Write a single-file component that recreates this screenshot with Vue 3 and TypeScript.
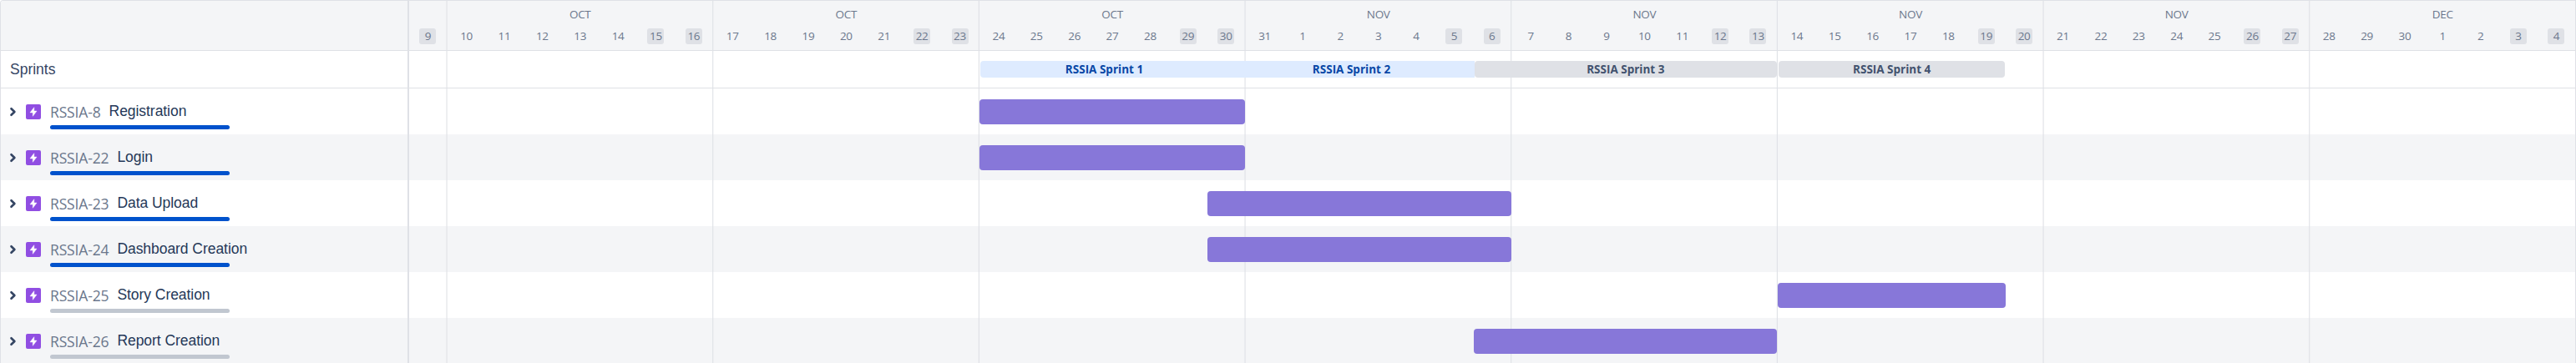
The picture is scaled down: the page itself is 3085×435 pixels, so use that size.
<script setup lang="ts">
interface Week { month: string; days: number[]; off: number[] }
interface Epic { id: string; title: string; done: boolean; start: number; end: number }
interface Sprint { name: string; start: number; end: number; tone: 'active' | 'future'; joined: string }

const PANEL = 490
const FIRST_LINE = 534.5
const WEEK = 318.67

const weeks: Week[] = [
  { month: 'OCT', days: [10, 11, 12, 13, 14, 15, 16], off: [5, 6] },
  { month: 'OCT', days: [17, 18, 19, 20, 21, 22, 23], off: [5, 6] },
  { month: 'OCT', days: [24, 25, 26, 27, 28, 29, 30], off: [5, 6] },
  { month: 'NOV', days: [31, 1, 2, 3, 4, 5, 6], off: [5, 6] },
  { month: 'NOV', days: [7, 8, 9, 10, 11, 12, 13], off: [5, 6] },
  { month: 'NOV', days: [14, 15, 16, 17, 18, 19, 20], off: [5, 6] },
  { month: 'NOV', days: [21, 22, 23, 24, 25, 26, 27], off: [5, 6] },
  { month: 'DEC', days: [28, 29, 30, 1, 2, 3, 4], off: [5, 6] },
]

const sprints: Sprint[] = [
  { name: 'RSSIA Sprint 1', start: 1174, end: 1471, tone: 'active', joined: 'first' },
  { name: 'RSSIA Sprint 2', start: 1471, end: 1766, tone: 'active', joined: 'last' },
  { name: 'RSSIA Sprint 3', start: 1766, end: 2127.6, tone: 'future', joined: '' },
  { name: 'RSSIA Sprint 4', start: 2130.4, end: 2401, tone: 'future', joined: '' },
]

const epics: Epic[] = [
  { id: 'RSSIA-8', title: 'Registration', done: true, start: 1173, end: 1491.3 },
  { id: 'RSSIA-22', title: 'Login', done: true, start: 1173, end: 1491.3 },
  { id: 'RSSIA-23', title: 'Data Upload', done: true, start: 1446, end: 1810 },
  { id: 'RSSIA-24', title: 'Dashboard Creation', done: true, start: 1446, end: 1810 },
  { id: 'RSSIA-25', title: 'Story Creation', done: false, start: 2129, end: 2402 },
  { id: 'RSSIA-26', title: 'Report Creation', done: false, start: 1765, end: 2128.4 },
]

const lines = weeks.map((_, i) => FIRST_LINE + WEEK * i - PANEL)

function sprintStyle(i: number) {
  const from = i === 0 ? PANEL : sprints[i - 1].end
  return { marginLeft: `${sprints[i].start - from}px`, width: `${sprints[i].end - sprints[i].start}px` }
}
function barStyle(e: Epic) {
  return { marginLeft: `${e.start - PANEL}px`, width: `${e.end - e.start}px` }
}
</script>

<template>
  <div class="roadmap">
    <div class="panel">
      <div class="panel-head"></div>
      <div class="panel-sprints">Sprints</div>
      <div v-for="e in epics" :key="e.id" class="epic">
        <svg class="chevron" viewBox="0 0 10 14" width="10" height="14">
          <path d="M2.5 3.2 L6.4 7 L2.5 10.8" />
        </svg>
        <svg class="epic-icon" viewBox="0 0 18 18" width="18" height="18">
          <rect width="18" height="18" rx="2" fill="#904ee2" />
          <path d="M9.8 3.7 V8.1 H13 L8.3 14.3 V9.9 H5 Z" fill="#fff" stroke="#fff" stroke-width=".5" stroke-linejoin="round" />
        </svg>
        <div class="epic-body">
          <div class="epic-text">
            <span class="epic-id">{{ e.id }}</span>
            <span class="epic-title">{{ e.title }}</span>
          </div>
          <div class="progress" :class="{ done: e.done }"></div>
        </div>
      </div>
    </div>

    <div class="timeline">
      <div class="dates">
        <div class="lead-day"><span class="day weekend">9</span></div>
        <div v-for="(w, i) in weeks" :key="i" class="week">
          <div class="month">{{ w.month }}</div>
          <div class="days">
            <span v-for="(d, j) in w.days" :key="j" class="day" :class="{ weekend: w.off.includes(j) }">{{ d }}</span>
          </div>
        </div>
      </div>
      <div class="sprint-row">
        <div v-for="(s, i) in sprints" :key="s.name" class="sprint" :class="[s.tone, s.joined]" :style="sprintStyle(i)">
          <span>{{ s.name }}</span>
        </div>
      </div>
      <div v-for="e in epics" :key="e.id" class="lane">
        <div class="bar" :style="barStyle(e)"></div>
      </div>
      <svg class="grid-lines" width="2594" height="435">
        <rect v-for="x in lines" :key="x" :x="x" y="0" width="1.1" height="435" fill="#dfe1e6" />
      </svg>
    </div>
  </div>
</template>

<style>
body { background: #fff; overflow: hidden; }
</style>

<style scoped>
.roadmap {
  box-sizing: border-box;
  width: 3085px;
  height: 435px;
  display: flex;
  overflow: hidden;
  border: 1px solid #dfe1e6;
  border-bottom: 0;
  border-top-left-radius: 4px;
  font-family: "Open Sans", "Noto Sans", sans-serif;
}
.panel {
  box-sizing: border-box;
  width: 489px;
  flex: none;
  border-right: 2px solid #dfe1e6;
}
.panel-head, .dates {
  box-sizing: border-box;
  height: 60px;
  background: #f4f5f7;
  border-bottom: 1px solid #dfe1e6;
}
.panel-sprints, .sprint-row {
  box-sizing: border-box;
  height: 45px;
  border-bottom: 1px solid #dfe1e6;
}
.panel-sprints {
  padding-left: 11px;
  font: 17.5px/44px "Liberation Sans", Arial, sans-serif;
  color: #344563;
}
.epic, .lane { height: 55px; background: #fff; }
.epic:nth-child(even), .lane:nth-child(even) { background: #f4f5f7; }
.epic { display: flex; align-items: flex-start; }
.chevron { margin: 21px 0 0 10px; }
.chevron path { fill: none; stroke: #344563; stroke-width: 2.6; stroke-linecap: round; stroke-linejoin: round; }
.epic-icon { margin: 19px 0 0 10px; }
.epic-body { margin-left: 11px; padding-top: 16px; }
.epic-text { display: flex; height: 28px; white-space: nowrap; }
.epic-id {
  font-size: 17.5px;
  line-height: 24px;
  letter-spacing: -0.15px;
  color: #6b778c;
}
.epic-title {
  margin-left: 10px;
  font: 17.5px/22px "Liberation Sans", Arial, sans-serif;
  letter-spacing: -0.05px;
  color: #253858;
}
.progress { width: 215px; height: 5px; border-radius: 2.5px; background: #c1c7d0; }
.progress.done { background: #0052cc; }

.timeline { position: relative; width: 2594px; flex: none; }
.dates { display: flex; color: #6b778c; font-size: 13.5px; }
.lead-day { width: 44.9px; flex: none; display: flex; justify-content: center; padding-top: 33px; }
.week { width: 318.67px; flex: none; }
.month { height: 33px; line-height: 32px; text-align: center; letter-spacing: -0.3px; padding-left: 1px; }
.days { display: grid; grid-template-columns: repeat(7, 1fr); justify-items: center; padding-left: 1px; }
.day {
  width: 20px;
  height: 18.5px;
  border-radius: 3px;
  line-height: 18px;
  text-align: center;
  letter-spacing: -0.3px;
}
.weekend { background: #dfe1e6; }
.sprint-row { display: flex; padding-top: 12px; }
.sprint {
  position: relative;
  z-index: 2;
  flex: none;
  height: 20px;
  border-radius: 4px;
  text-align: center;
  font-size: 13.5px;
  line-height: 20px;
  font-weight: 700;
  white-space: nowrap;
}
.active { background: #deebff; color: #0747a6; }
.future { background: #dfe1e6; color: #42526e; }
.first { border-radius: 4px 0 0 4px; }
.last { border-radius: 0; }
.lane { display: flex; padding-top: 13px; box-sizing: border-box; }
.bar { position: relative; z-index: 2; height: 29.5px; border-radius: 4px; background: #8777d9; }
.grid-lines { position: absolute; left: 0; top: 0; z-index: 1; }
</style>
